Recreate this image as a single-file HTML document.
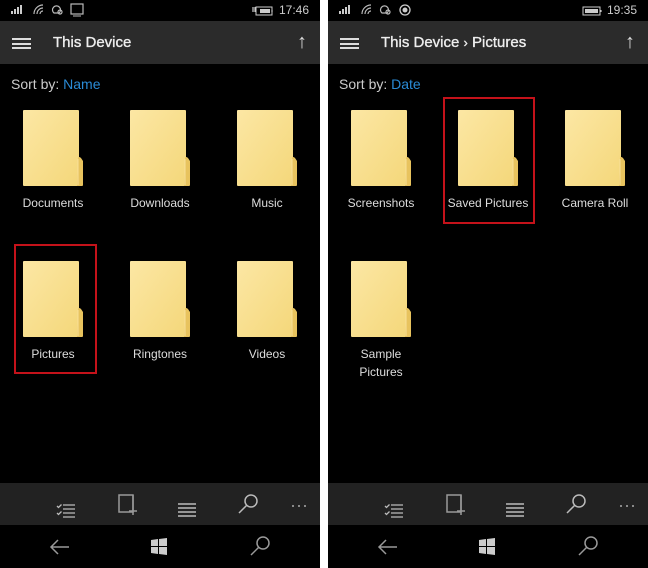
<!DOCTYPE html>
<html><head><meta charset="utf-8"><style>
*{margin:0;padding:0;box-sizing:border-box}
body{width:648px;height:568px;background:#fff;position:relative;overflow:hidden;font-family:"Segoe UI","Liberation Sans",sans-serif}
.p{position:absolute;top:0;width:320px;height:568px;background:#000;overflow:hidden}
.hdr{position:absolute;left:0;top:21px;width:320px;height:43px;background:#2b2b2b}
.ham{position:absolute;left:12px;top:17px;width:19px;height:11px;border-top:2px solid #ddd;border-bottom:2px solid #ddd}
.ham:after{content:"";position:absolute;left:0;top:2.5px;width:19px;height:2px;background:#ddd}
.title{position:absolute;left:53px;top:0;line-height:44px;color:#eee;font-size:15px;-webkit-text-stroke:0.35px #eee}
.sort{position:absolute;left:11px;top:76px;font-size:14px;color:#ccc}
.sort b{font-weight:normal;color:#2a8bd6}
.it{position:absolute;width:106px;text-align:center;color:#ddd;font-size:12px;line-height:18px}
.it svg{display:block;margin:0 auto 8px}
.time{position:absolute;right:11px;top:3px;color:#ccc;font-size:12px}
.app{position:absolute;left:0;top:483px;width:320px;height:42px;background:#222}
.red{position:absolute;border:2px solid #c4121a}
.up{position:absolute;right:13px;top:0;line-height:43px;color:#ddd;font-size:20px}
</style></head><body>
<svg width="0" height="0" style="position:absolute"><defs>
<linearGradient id="g" x1="0" y1="0" x2="1" y2="1"><stop offset="0" stop-color="#fce7a4"/><stop offset="1" stop-color="#f4d77a"/></linearGradient>
<symbol id="f" viewBox="0 0 60 76"><rect x="0" y="0" width="56" height="76" rx="1" fill="url(#g)"/><path d="M55 48 Q56 46 58 48 L60 51 L60 75 Q60 76 59 76 L54 76 Z" fill="#e8c35e"/><path d="M55 49 L55 75" stroke="#f9e09a" stroke-width="1"/></symbol>
<symbol id="bar" viewBox="0 0 320 85">
<g stroke="#bbb" fill="none" stroke-width="1.5">
<path d="M63 22h12M63 26h12M63 30h12M63 34h12M57 23l1.5 1.5 3-3M57 30l1.5 1.5 3-3" stroke-width="1.3"/>
<rect x="119" y="12" width="14" height="17" stroke="#999"/>
<path d="M133 12v13M129 28h8M133 24v8" stroke="#999"/>
<path d="M178 21h18M178 25h18M178 29h18M178 33h18" />
<circle cx="251" cy="18" r="6"/><path d="M247 22l-8 8"/>
<path d="M51 64h18M58 57l-7 7 7 7" stroke="#999"/>
<circle cx="263" cy="60" r="6" stroke="#999"/><path d="M259 64l-8 8" stroke="#999"/>
</g>
<g fill="#aaa"><circle cx="293" cy="23" r="1"/><circle cx="299" cy="23" r="1"/><circle cx="305" cy="23" r="1"/>
<path d="M151 57l7-1v7h-7zM159 56l8-1v8h-8zM151 64h7v7l-7-1zM159 64h8v8l-8-1z" fill="#ccc"/></g>
</symbol>
<symbol id="sb" viewBox="0 0 100 21"><g fill="#ccc"><rect x="11" y="11" width="2" height="3"/><rect x="14" y="9" width="2" height="5"/><rect x="17" y="7" width="2" height="7"/><rect x="20" y="5" width="2" height="9"/></g>
<g stroke="#bbb" fill="none" stroke-width="1.2"><path d="M34 14a9 9 0 0 1 9-9M37 14a6 6 0 0 1 6-6M40 14a3 3 0 0 1 3-3"/><path d="M54 13a4 4 0 1 1 5 0h-5z"/><circle cx="60" cy="12" r="2"/></g></symbol>
</defs></svg>

<div class="p" style="left:0">
<svg style="position:absolute;left:0;top:0" width="100" height="21"><use href="#sb"/></svg>
<svg style="position:absolute;left:70px;top:0" width="14" height="21"><rect x="1" y="4" width="12" height="10" fill="none" stroke="#bbb" stroke-width="1.2"/><path d="M3 16h8" stroke="#bbb"/></svg>
<svg style="position:absolute;left:252px;top:4px" width="24" height="13"><rect x="4" y="3" width="16" height="8" fill="none" stroke="#ccc"/><rect x="8" y="5" width="10" height="4" fill="#ccc"/><path d="M20 6v2M1 3v5M3 3v5" stroke="#ccc" stroke-width="1.2"/></svg>
<div class="time">17:46</div>
<div class="hdr"><div class="ham"></div><div class="title">This Device</div><div class="up">↑</div></div>
<div class="sort">Sort by: <b>Name</b></div>
<div class="it" style="left:0;top:110px"><svg width="60" height="76"><use href="#f"/></svg>Documents</div>
<div class="it" style="left:107px;top:110px"><svg width="60" height="76"><use href="#f"/></svg>Downloads</div>
<div class="it" style="left:214px;top:110px"><svg width="60" height="76"><use href="#f"/></svg>Music</div>
<div class="it" style="left:0;top:261px"><svg width="60" height="76"><use href="#f"/></svg>Pictures</div>
<div class="it" style="left:107px;top:261px"><svg width="60" height="76"><use href="#f"/></svg>Ringtones</div>
<div class="it" style="left:214px;top:261px"><svg width="60" height="76"><use href="#f"/></svg>Videos</div>
<div class="red" style="left:14px;top:244px;width:83px;height:130px"></div>
<div class="app"></div>
<svg style="position:absolute;left:0;top:483px" width="320" height="85"><use href="#bar"/></svg>
</div>

<div class="p" style="left:328px">
<svg style="position:absolute;left:0;top:0" width="100" height="21"><use href="#sb"/></svg>
<svg style="position:absolute;left:70px;top:0" width="14" height="21"><circle cx="7" cy="10" r="5" fill="none" stroke="#ccc" stroke-width="1.3"/><circle cx="7" cy="10" r="2.5" fill="#ccc"/></svg>
<svg style="position:absolute;left:254px;top:4px" width="22" height="13"><rect x="1" y="3" width="17" height="8" fill="none" stroke="#ccc"/><rect x="3" y="5" width="13" height="4" fill="#ccc"/><path d="M19 6v2" stroke="#ccc" stroke-width="1.2"/></svg>
<div class="time">19:35</div>
<div class="hdr"><div class="ham"></div><div class="title">This Device <span style="font-size:13px">›</span> Pictures</div><div class="up">↑</div></div>
<div class="sort">Sort by: <b>Date</b></div>
<div class="it" style="left:0;top:110px"><svg width="60" height="76"><use href="#f"/></svg>Screenshots</div>
<div class="it" style="left:107px;top:110px"><svg width="60" height="76"><use href="#f"/></svg>Saved Pictures</div>
<div class="it" style="left:214px;top:110px"><svg width="60" height="76"><use href="#f"/></svg>Camera Roll</div>
<div class="it" style="left:0;top:261px"><svg width="60" height="76"><use href="#f"/></svg>Sample<br>Pictures</div>
<div class="red" style="left:115px;top:97px;width:92px;height:127px"></div>
<div class="app"></div>
<svg style="position:absolute;left:0;top:483px" width="320" height="85"><use href="#bar"/></svg>
</div>
</body></html>
